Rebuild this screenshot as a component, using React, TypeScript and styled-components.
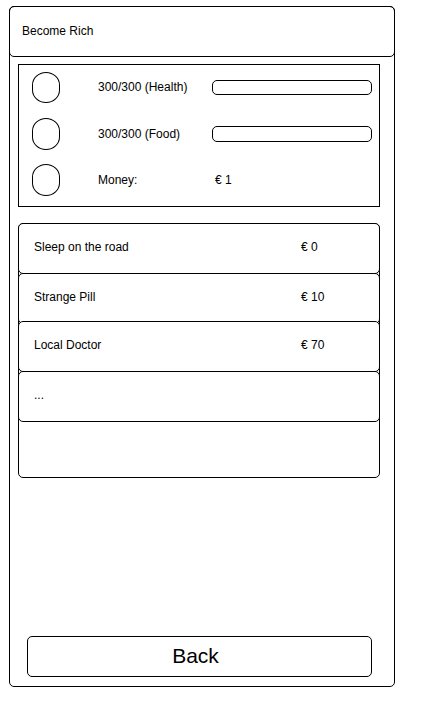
import React from "react";
import styled, { createGlobalStyle } from "styled-components";

const GlobalStyle = createGlobalStyle`
  *, *::before, *::after { box-sizing: border-box; }
  body {
    margin: 0;
    background: #fff;
    color: #000;
    font: 12px/16px "Liberation Sans", Arial, sans-serif;
  }
`;

const Page = styled.div`
  display: flex;
  min-height: 100vh;
  padding: 6px 43px 20px 9px;
`;

const Panel = styled.main`
  flex: 1;
  display: flex;
  flex-direction: column;
  border: 1px solid #000;
  border-radius: 5px;
`;

const Header = styled.header`
  margin: -1px -1px 0;
  padding: 16px 12px 17px;
  border: 1px solid #000;
  border-radius: 5px;
`;

const Title = styled.h1`
  margin: 0;
  font-size: 12px;
  font-weight: 400;
`;

const Stats = styled.ul`
  display: grid;
  grid-template-rows: 46px 46px 42px;
  margin: 7px 14px 16px 8px;
  padding: 7px 7px 0 13px;
  border: 1px solid #000;
  list-style: none;
`;

const Stat = styled.li`
  display: grid;
  grid-template-columns: 66px 114px 1fr;
  align-items: center;
  align-self: start;
`;

const StatIcon = styled.span<{ $height: number }>`
  width: 28px;
  height: ${(p) => p.$height}px;
  border: 1px solid #000;
  border-radius: 14px / 13px;
`;

const StatText = styled.span`
  padding-bottom: 1px;
  white-space: nowrap;
`;

const Meter = styled.div<{ $height: number }>`
  height: ${(p) => p.$height}px;
  border: 1px solid #000;
  border-radius: 5px;
`;

const Amount = styled(StatText)`
  padding-left: 3px;
`;

const Shop = styled.ul`
  margin: 0 14px 24px 8px;
  padding: 0 0 55px;
  border: 1px solid #000;
  border-radius: 5px;
  list-style: none;
`;

const ShopItem = styled.li<{ $overlap: number }>`
  margin: -${(p) => p.$overlap}px -1px 0;
`;

const ItemButton = styled.button`
  display: grid;
  grid-template-columns: 1fr 78px;
  width: 100%;
  padding: 15px 0 18px 15px;
  border: 1px solid #000;
  border-radius: 5px;
  background: #fff;
  color: inherit;
  font: inherit;
  text-align: left;
  cursor: pointer;
`;

const BackButton = styled.button`
  margin: auto 22px 9px 17px;
  padding: 7px 8px 8px 0;
  border: 1px solid #000;
  border-radius: 5px;
  background: #fff;
  color: inherit;
  font: inherit;
  font-size: 21px;
  line-height: 24px;
  cursor: pointer;
`;

const meters = [
  { id: "health", text: "300/300 (Health)", icon: 31, bar: 15 },
  { id: "food", text: "300/300 (Food)", icon: 32, bar: 16 },
];

const items = [
  { name: "Sleep on the road", price: "€ 0", overlap: 1 },
  { name: "Strange Pill", price: "€ 10", overlap: 1 },
  { name: "Local Doctor", price: "€ 70", overlap: 3 },
  { name: "...", price: "", overlap: 1 },
];

export default function App() {
  return (
    <>
      <GlobalStyle />
      <Page>
        <Panel>
          <Header>
            <Title>Become Rich</Title>
          </Header>
          <Stats>
            {meters.map((m) => (
              <Stat key={m.id}>
                <StatIcon $height={m.icon} />
                <StatText id={m.id}>{m.text}</StatText>
                <Meter
                  $height={m.bar}
                  role="meter"
                  aria-labelledby={m.id}
                  aria-valuemin={0}
                  aria-valuemax={300}
                  aria-valuenow={300}
                />
              </Stat>
            ))}
            <Stat>
              <StatIcon $height={32} />
              <StatText>Money:</StatText>
              <Amount>€ 1</Amount>
            </Stat>
          </Stats>
          <Shop>
            {items.map((item) => (
              <ShopItem key={item.name} $overlap={item.overlap}>
                <ItemButton type="button">
                  <span>{item.name}</span>
                  <span>{item.price}</span>
                </ItemButton>
              </ShopItem>
            ))}
          </Shop>
          <BackButton type="button">Back</BackButton>
        </Panel>
      </Page>
    </>
  );
}
